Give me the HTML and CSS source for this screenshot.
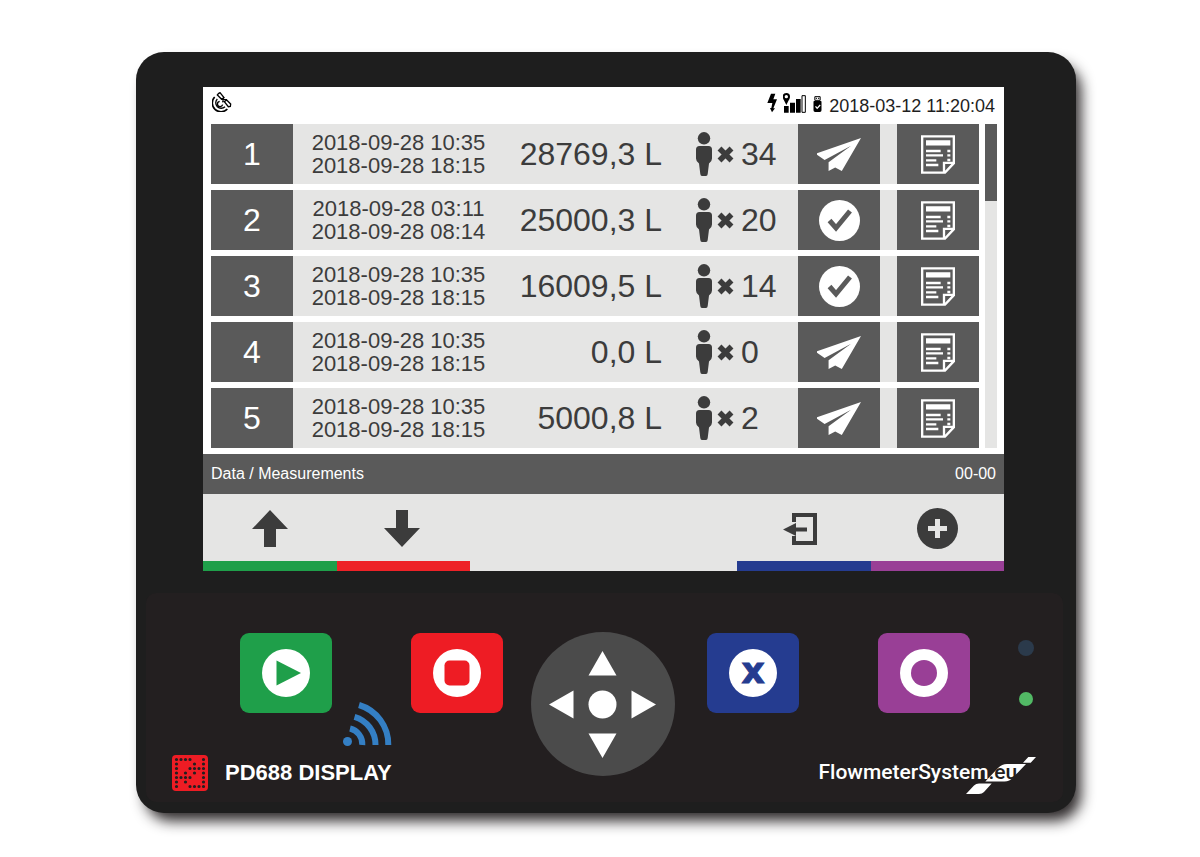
FILE: index.html
```html
<!DOCTYPE html>
<html lang="en">
<head>
    <meta charset="UTF-8">
    <meta name="viewport" content="width=device-width, initial-scale=1.0">
    <title>PD688 Display</title>
    <link rel="stylesheet" href="styles.css">
</head>
<body>

    <!-- shared icons -->
    <svg class="sprite" aria-hidden="true">
        <symbol id="person" viewBox="0 0 16 44">
            <circle cx="8" cy="6.3" r="6.2"/>
            <path d="M3.5 14h9q3.5 0 3.5 3.500v9q0 3-3 5l-1.300 10.500q-.2 2-1.700 2h-4q-1.500 0-1.700-2L3 31.500q-3-2-3-5v-9Q0 14 3.500 14z"/>
        </symbol>
        <symbol id="times" viewBox="0 0 17 17">
            <path d="M2.500 2.500l12 12m0-12l-12 12" stroke="currentColor" stroke-width="5.500"/>
        </symbol>
        <symbol id="send" viewBox="0 0 133 99">
            <path d="M133 0L0 46v4l23 16 80-43-68 50v26l20-10 20 10z"/>
        </symbol>
        <symbol id="done" viewBox="0 0 41 41">
            <circle cx="20.500" cy="20.500" r="20.500"/>
            <path d="M10.500 20.500l6.500 7.500 14-17" fill="none" stroke="#5a5a5a" stroke-width="5"/>
        </symbol>
        <symbol id="report" viewBox="0 0 102 116">
            <path d="M3.500 3.500h95V84L72 112.500H3.500zM69 112V83h29" fill="none" stroke="currentColor" stroke-width="7"/>
            <path d="M15 15h73v16H15zM15 44h44v7H15zM15 57h51v7H15zM15 72h31v7H15zM15 86h37v7H15zM79 44h9v7h-9zM79 57h9v7h-9zM79 71h9v7h-9z"/>
        </symbol>
    </svg>

    <main class="device">
        <section class="screen">
            <header class="status">
                <svg class="satellite line-art" viewBox="0 0 60 60" stroke="#000">
                    <path d="M8 15A25 25 0 1 0 46 51" stroke-width="5"/>
                    <path d="M16 21A16 16 0 1 0 39 44" stroke-width="4"/>
                    <path d="M23 28A8 8 0 1 0 32 38" stroke-width="4"/>
                    <path d="M19 5l5-3 12 15-7 5L16 9zM44 24l12 12-1 7-6 1-12-15zM28 22l17 1M35 16l-3 15" stroke-width="4"/>
                </svg>
                <div class="indicators">
                    <svg class="bolt" viewBox="0 0 30 63">
                        <path d="M12 5h13l-6 17h11L19 49h5l-9 12-6-13h4l3-15H1z"/>
                    </svg>
                    <svg class="signal" viewBox="0 0 69 63">
                        <circle cx="10" cy="14" r="8" fill="none" stroke="#000" stroke-width="6"/>
                        <path d="M1 21h18l-9 18zM3 42h14v20H3zM21 32h15v30H21zM39 21h14v41H39z"/>
                        <path d="M57 11h10v50H57z" fill="none" stroke="#000" stroke-width="3"/>
                    </svg>
                    <svg class="usb" viewBox="0 0 26 63">
                        <path d="M5 14h16v11H5z" fill="none" stroke="#000" stroke-width="3"/>
                        <path d="M8 17h3v4H8zM15 17h3v4h-3zM3 27h20q2 0 2 2v26q0 5-5 5H6q-5 0-5-5V29q0-2 2-2z"/>
                        <path d="M7 43l5 6 9-10" fill="none" stroke="#fff" stroke-width="4"/>
                    </svg>
                    <time>2018-03-12 11:20:04</time>
                </div>
            </header>

            <div class="list">
                <table>
                    <colgroup>
                        <col class="col-number">
                        <col class="col-dates">
                        <col>
                        <col class="col-people">
                        <col class="col-send">
                        <col class="col-report">
                    </colgroup>
                    <tbody>
                        <tr>
                            <th scope="row">1</th>
                            <td class="dates">2018-09-28 10:35<br>2018-09-28 18:15</td>
                            <td class="volume">28769,3 L</td>
                            <td><div class="people"><svg class="person"><use href="#person"/></svg><svg class="times"><use href="#times"/></svg>34</div></td>
                            <td><button type="button" class="action" aria-label="Send"><svg class="send"><use href="#send"/></svg></button></td>
                            <td class="report-cell"><button type="button" class="action" aria-label="Report"><svg class="report"><use href="#report"/></svg></button></td>
                        </tr>
                        <tr>
                            <th scope="row">2</th>
                            <td class="dates">2018-09-28 03:11<br>2018-09-28 08:14</td>
                            <td class="volume">25000,3 L</td>
                            <td><div class="people"><svg class="person"><use href="#person"/></svg><svg class="times"><use href="#times"/></svg>20</div></td>
                            <td><button type="button" class="action" aria-label="Sent"><svg class="done"><use href="#done"/></svg></button></td>
                            <td class="report-cell"><button type="button" class="action" aria-label="Report"><svg class="report"><use href="#report"/></svg></button></td>
                        </tr>
                        <tr>
                            <th scope="row">3</th>
                            <td class="dates">2018-09-28 10:35<br>2018-09-28 18:15</td>
                            <td class="volume">16009,5 L</td>
                            <td><div class="people"><svg class="person"><use href="#person"/></svg><svg class="times"><use href="#times"/></svg>14</div></td>
                            <td><button type="button" class="action" aria-label="Sent"><svg class="done"><use href="#done"/></svg></button></td>
                            <td class="report-cell"><button type="button" class="action" aria-label="Report"><svg class="report"><use href="#report"/></svg></button></td>
                        </tr>
                        <tr>
                            <th scope="row">4</th>
                            <td class="dates">2018-09-28 10:35<br>2018-09-28 18:15</td>
                            <td class="volume">0,0 L</td>
                            <td><div class="people"><svg class="person"><use href="#person"/></svg><svg class="times"><use href="#times"/></svg>0</div></td>
                            <td><button type="button" class="action" aria-label="Send"><svg class="send"><use href="#send"/></svg></button></td>
                            <td class="report-cell"><button type="button" class="action" aria-label="Report"><svg class="report"><use href="#report"/></svg></button></td>
                        </tr>
                        <tr>
                            <th scope="row">5</th>
                            <td class="dates">2018-09-28 10:35<br>2018-09-28 18:15</td>
                            <td class="volume">5000,8 L</td>
                            <td><div class="people"><svg class="person"><use href="#person"/></svg><svg class="times"><use href="#times"/></svg>2</div></td>
                            <td><button type="button" class="action" aria-label="Send"><svg class="send"><use href="#send"/></svg></button></td>
                            <td class="report-cell"><button type="button" class="action" aria-label="Report"><svg class="report"><use href="#report"/></svg></button></td>
                        </tr>
                    </tbody>
                </table>
                <div class="scrollbar"><div class="thumb"></div></div>
            </div>

            <div class="path-bar">
                <span>Data / Measurements</span>
                <span>00-00</span>
            </div>

            <nav class="soft-keys">
                <button type="button" class="green" aria-label="Up">
                    <svg width="36" height="37" viewBox="0 0 36 37"><path d="M18 0l18 19H24v18H12V19H0z"/></svg>
                </button>
                <button type="button" class="red" aria-label="Down">
                    <svg width="38" height="37" viewBox="0 0 38 37"><path d="M18 37l18-19H24V0H12v18H0z"/></svg>
                </button>
                <button type="button" class="blue" aria-label="Exit">
                    <svg width="42" height="32" viewBox="0 0 42 32">
                        <path d="M11 9V2h21v28H11v-7" fill="none" stroke="currentColor" stroke-width="4"/>
                        <path d="M0 16.500L13 10v4.500h11v4H13V23z"/>
                    </svg>
                </button>
                <button type="button" class="purple" aria-label="Add">
                    <svg width="41" height="41" viewBox="0 0 41 41">
                        <circle cx="20.500" cy="20.500" r="20.500"/>
                        <path d="M20.500 11v19M11 20.500h19" stroke="#e5e5e4" stroke-width="5"/>
                    </svg>
                </button>
            </nav>
        </section>

        <section class="panel">
            <div class="panel-left">
                <div class="keys">
                    <button type="button" class="key green" aria-label="Start">
                        <svg viewBox="0 0 48 48"><circle cx="24" cy="24" r="24"/><path class="hole" d="M14.500 11.500L39 24 14.500 36.500z"/></svg>
                    </button>
                    <svg class="wireless line-art" viewBox="0 0 49 44" stroke="#347fc4" stroke-width="6">
                        <circle cx="4.500" cy="39.500" r="4.500" fill="#347fc4" stroke="none"/>
                        <path d="M7 26.500A16 16 0 0 1 19.300 43M11.500 14.800A29 29 0 0 1 32.500 43M16 3A41 41 0 0 1 45.300 43"/>
                    </svg>
                    <button type="button" class="key red" aria-label="Stop">
                        <svg viewBox="0 0 48 48"><circle cx="24" cy="24" r="24"/><rect class="hole" x="11.500" y="11.500" width="25" height="25" rx="5"/></svg>
                    </button>
                </div>
                <div class="brand">
                    <svg width="36" height="36" viewBox="0 0 36 36">
                        <rect width="36" height="36" rx="4" fill="#ee1c24"/>
                        <g fill="none" stroke="#231f20" stroke-width="3.200" stroke-linecap="round">
                            <path d="M4.500 4.500h0M9 4.500h0M13.500 4.500h0M18 4.500h0M31.500 4.500h0"/>
                            <path d="M4.500 9h0M22.500 9h0M31.500 9h0"/>
                            <path d="M4.500 13.500h0M18 13.500h0M22.500 13.500h0M27 13.500h0M31.500 13.500h0"/>
                            <path d="M4.500 18h0M13.500 18h0M22.500 18h0M31.500 18h0"/>
                            <path d="M4.500 22.500h0M9 22.500h0M13.500 22.500h0M18 22.500h0M31.500 22.500h0"/>
                            <path d="M4.500 27h0M13.500 27h0M31.500 27h0"/>
                            <path d="M4.500 31.500h0M18 31.500h0M22.500 31.500h0M27 31.500h0M31.500 31.500h0"/>
                        </g>
                    </svg>
                    <span>PD688 DISPLAY</span>
                </div>
            </div>

            <div class="dpad">
                <button type="button" class="up" aria-label="Up"><svg viewBox="0 0 43 43"><path d="M21.500 11l14 24.500h-28z"/></svg></button>
                <button type="button" class="left" aria-label="Left"><svg viewBox="0 0 43 43"><path d="M11 21.500l24.500-14v28z"/></svg></button>
                <button type="button" class="ok" aria-label="OK"><svg viewBox="0 0 43 43"><circle cx="21.500" cy="21.500" r="14"/></svg></button>
                <button type="button" class="right" aria-label="Right"><svg viewBox="0 0 43 43"><path d="M32 21.500l-24.500-14v28z"/></svg></button>
                <button type="button" class="down" aria-label="Down"><svg viewBox="0 0 43 43"><path d="M21.500 32l14-24.500h-28z"/></svg></button>
            </div>

            <div class="panel-right">
                <div class="keys">
                    <button type="button" class="key blue" aria-label="Cancel">
                        <svg viewBox="0 0 48 48"><circle cx="24" cy="24" r="24"/><text class="hole" x="24" y="34" text-anchor="middle">x</text></svg>
                    </button>
                    <button type="button" class="key purple" aria-label="Menu">
                        <svg viewBox="0 0 48 48"><circle cx="24" cy="24" r="24"/><circle class="hole" cx="24" cy="24" r="13"/></svg>
                    </button>
                    <div class="leds">
                        <span class="led"></span>
                        <span class="led on"></span>
                    </div>
                </div>
                <a class="maker" href="#">
                    <svg viewBox="0 0 70 37"><path d="M57 5.700L62.300 0H70l-5.300 5.700zM19.300 24.500L32 11q4-4 9-4h19L47.500 20q-4 4.500-9 4.500zM0 37l8-8.500q2-2 5-2h12.700L18 35q-2 2-5 2z"/></svg>
                    <span>FlowmeterSystem<b>.eu</b></span>
                </a>
            </div>
        </section>
    </main>

</body>
</html>
```
FILE: styles.css
```css
* {
    box-sizing: border-box;
}

body {
    margin: 0;
    padding: 52px 124px 44px 136px;
    background-color: #fff;
    font-family: "Liberation Sans", Arial, sans-serif;
    color: #3c3c3c;
}

svg {
    display: block;
    fill: currentColor;
    flex: none;
}

.line-art {
    fill: none;
}

button {
    display: flex;
    justify-content: center;
    align-items: center;
    padding: 0;
    border: none;
    background: none;
    color: inherit;
    font: inherit;
    cursor: pointer;
}

.sprite {
    position: absolute;
    width: 0;
    height: 0;
}

.device {
    min-width: 940px;
    padding: 35px 13px 11px 10px;
    border-radius: 28px;
    background-color: #1e1e1e;
    box-shadow: 7px 10px 14px -2px rgba(35, 31, 32, 0.95);
}

/* screen */
.screen {
    margin: 0 59px 22px 57px;
    background-color: #fff;
}

.status {
    display: flex;
    justify-content: space-between;
    height: 31px;
    padding: 5px 9px 0 9px;
    color: #000;
}

.satellite {
    width: 20px;
    height: 20px;
}

.indicators {
    display: flex;
}

.bolt {
    width: 10px;
    height: 21px;
    margin-right: 6px;
}

.signal {
    width: 23px;
    height: 21px;
    margin-right: 7px;
}

.usb {
    width: 9px;
    height: 21px;
    margin-right: 7px;
}

.status time {
    font-size: 18px;
    line-height: 28px;
    color: #1e1e1e;
}

.list {
    display: flex;
    gap: 6px;
    padding: 0 7px 0 8px;
}

table {
    flex: 1;
    table-layout: fixed;
    width: 100%;
    border-collapse: separate;
    border-spacing: 0 6px;
}

.col-number,
.col-send {
    width: 82px;
}

.col-dates {
    width: 211px;
}

.col-people {
    width: 136px;
}

.col-report {
    width: 99px;
}

th,
td {
    height: 60px;
    padding: 0;
    background-color: #e5e5e4;
}

th {
    background-color: #5a5a5a;
    color: #fff;
    font-size: 32px;
    font-weight: normal;
}

.dates {
    font-size: 22px;
    line-height: 23px;
    text-align: center;
}

.volume {
    font-size: 32px;
    text-align: right;
}

.people {
    display: flex;
    align-items: center;
    padding-left: 34px;
    font-size: 32px;
}

.person {
    width: 16px;
    height: 44px;
    margin-right: 5px;
}

.times {
    width: 17px;
    height: 17px;
    margin-right: 7px;
}

.action {
    width: 100%;
    height: 60px;
    background-color: #5a5a5a;
    color: #fff;
}

.report-cell {
    padding-left: 17px;
}

.send {
    width: 44px;
    height: 33px;
}

.done {
    width: 41px;
    height: 41px;
}

.report {
    width: 34px;
    height: 39px;
}

.scrollbar {
    width: 12px;
    margin: 6px 0;
    background-color: #e5e5e4;
}

.thumb {
    height: 77px;
    background-color: #5a5a5a;
}

.path-bar {
    display: flex;
    justify-content: space-between;
    padding: 0 8px;
    background-color: #5a5a5a;
    color: #fff;
    font-size: 16px;
    line-height: 40px;
}

.soft-keys {
    display: grid;
    grid-template-columns: repeat(6, 1fr);
    background-color: #e5e5e4;
}

.soft-keys button {
    height: 77px;
    padding-top: 2px;
    border-bottom: 10px solid;
}

.soft-keys svg {
    color: #3c3c3c;
}

.soft-keys .green {
    border-color: #1f9f4a;
}

.soft-keys .red {
    border-color: #ee2227;
}

.soft-keys .blue {
    grid-column: 5;
    border-color: #253c90;
}

.soft-keys .purple {
    border-color: #993f96;
}

/* front panel */
.panel {
    display: grid;
    grid-template-columns: 1fr 144px 1fr;
    padding: 39px 4px 0 0;
    height: 209px;
    border-radius: 10px;
    background-color: #231f20;
    color: #fff;
}

.keys {
    display: flex;
    align-items: flex-start;
    padding-top: 1px;
}

.panel-left .keys {
    justify-content: flex-end;
    padding-right: 28px;
}

.panel-right .keys {
    gap: 79px;
    padding-left: 32px;
}

.key {
    width: 92px;
    height: 80px;
    border-radius: 9px;
    color: #fff;
}

.key svg {
    width: 48px;
    height: 48px;
}

.key.green {
    background-color: #1f9f4a;
}

.key.red {
    background-color: #ee1c24;
}

.key.blue {
    background-color: #253c90;
}

.key.purple {
    background-color: #993f96;
}

.green .hole {
    fill: #1f9f4a;
}

.red .hole {
    fill: #ee1c24;
}

.blue .hole {
    fill: #253c90;
    stroke: #253c90;
    font-family: "DejaVu Sans", sans-serif;
    font-size: 36px;
    font-weight: bold;
}

.purple .hole {
    fill: #993f96;
}

.wireless {
    width: 49px;
    height: 44px;
    margin: 69px 19px 0 11px;
}

.brand {
    display: flex;
    align-items: center;
    gap: 17px;
    padding: 9px 0 0 26px;
    font-size: 22px;
    font-weight: bold;
}

.dpad {
    display: grid;
    grid-template-columns: repeat(3, 43px);
    grid-template-rows: repeat(3, 43px);
    grid-template-areas:
        ". up ."
        "left ok right"
        ". down .";
    place-content: center;
    height: 144px;
    border-radius: 50%;
    background-color: #4b4b4b;
}

.dpad svg {
    width: 43px;
    height: 43px;
}

.up {
    grid-area: up;
}

.left {
    grid-area: left;
}

.ok {
    grid-area: ok;
}

.right {
    grid-area: right;
}

.down {
    grid-area: down;
}

.leds {
    display: flex;
    flex-direction: column;
    align-items: center;
    gap: 36px;
    margin: 7px 0 0 -31px;
}

.led {
    width: 16px;
    height: 16px;
    border-radius: 50%;
    background-color: #2b3a4b;
}

.led.on {
    width: 14px;
    height: 14px;
    background-color: #52b965;
}

.maker {
    display: block;
    position: relative;
    width: 217px;
    margin: 44px 0 0 144px;
    color: #fff;
    font-family: Roboto, sans-serif;
    font-size: 21px;
    font-weight: 500;
    line-height: 30px;
    text-decoration: none;
}

.maker svg {
    position: absolute;
    right: 0;
    top: 0;
    width: 70px;
    height: 37px;
}

.maker span {
    position: relative;
}

.maker b {
    color: #231f20;
    font-weight: 500;
}
```
